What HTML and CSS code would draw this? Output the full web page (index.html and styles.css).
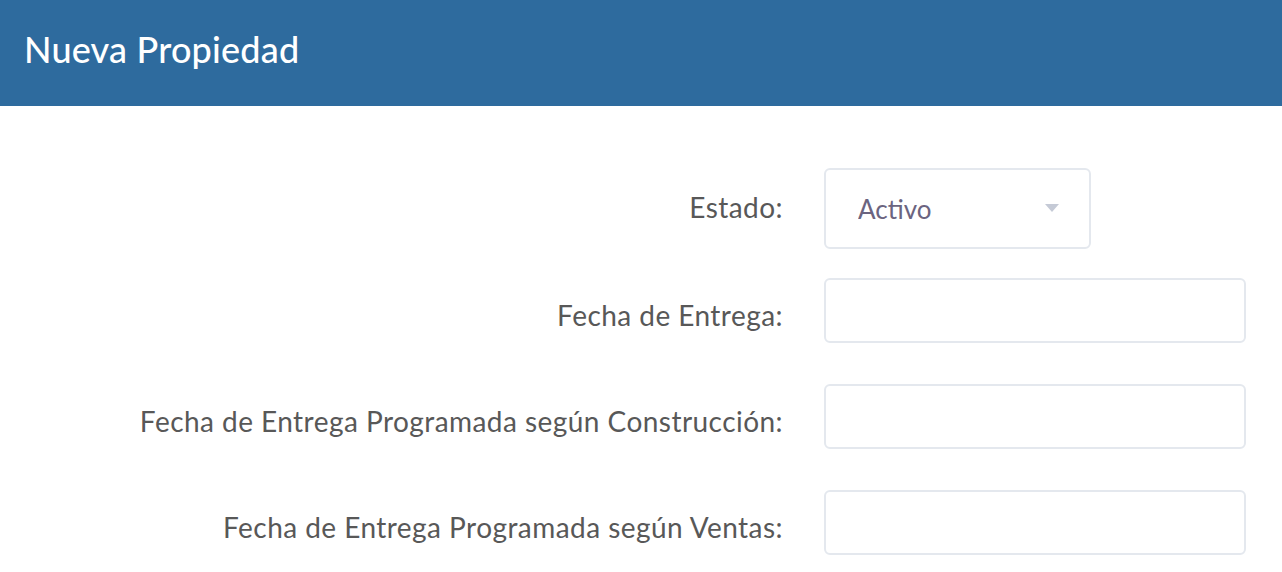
FILE: index.html
```
<!DOCTYPE html>
<html lang="es">

<head>
    <meta charset="UTF-8">
    <meta name="viewport" content="width=device-width, initial-scale=1.0">
    <title>Nueva Propiedad</title>
    <link rel="stylesheet" href="styles.css">
</head>

<body>
    <div class="header">
        <h1>Nueva Propiedad</h1>
    </div>

    <form class="form">
        <div class="row row-select">
            <label for="estado">Estado:</label>
            <div class="select">
                <select id="estado">
                    <option>Activo</option>
                    <option>Inactivo</option>
                </select>
                <span class="arrow"></span>
            </div>
        </div>
        <div class="row">
            <label for="fechaEntrega">Fecha de Entrega:</label>
            <input type="text" id="fechaEntrega">
        </div>
        <div class="row">
            <label for="fechaConstruccion">Fecha de Entrega Programada según Construcción:</label>
            <input type="text" id="fechaConstruccion">
        </div>
        <div class="row">
            <label for="fechaVentas">Fecha de Entrega Programada según Ventas:</label>
            <input type="text" id="fechaVentas">
        </div>
    </form>
</body>

</html>
```

FILE: styles.css
```
body {
    margin: 0;
    padding: 0;
    background-color: white;
    font-family: Lato, 'Open Sans', sans-serif;
}

.header {
    background-color: #2e6b9e;
    height: 106px;
    padding: 0 24px;
    box-sizing: border-box;
    display: flex;
    align-items: center;
}

.header h1 {
    margin: 0;
    color: white;
    font-size: 36px;
    font-weight: 500;
    letter-spacing: 0.2px;
    margin-top: -8px;
}

.form {
    padding-top: 62px;
    display: flex;
    flex-direction: column;
    gap: 41px;
}

.row {
    display: grid;
    grid-template-columns: 783px 422px;
    column-gap: 41px;
    align-items: start;
}

.row-select {
    margin-bottom: -12px;
}

.row label {
    text-align: right;
    font-size: 28px;
    letter-spacing: 0.45px;
    color: #585858;
    line-height: 30px;
    padding-top: 22px;
}

.row-select label {
    padding-top: 24px;
}

.select {
    position: relative;
    width: 267px;
}

.select select {
    width: 100%;
    height: 81px;
    appearance: none;
    border: 2px solid #e4e8ee;
    border-radius: 6px;
    background-color: white;
    padding: 0 32px;
    font-family: inherit;
    font-size: 26px;
    color: #6b6480;
}

.arrow {
    position: absolute;
    right: 32px;
    top: 36px;
    width: 0;
    height: 0;
    border-left: 7px solid transparent;
    border-right: 7px solid transparent;
    border-top: 8px solid #c5cad6;
}

.row input {
    height: 65px;
    box-sizing: border-box;
    border: 2px solid #e4e8ee;
    border-radius: 6px;
    font-size: 26px;
    padding: 0 16px;
}
```
